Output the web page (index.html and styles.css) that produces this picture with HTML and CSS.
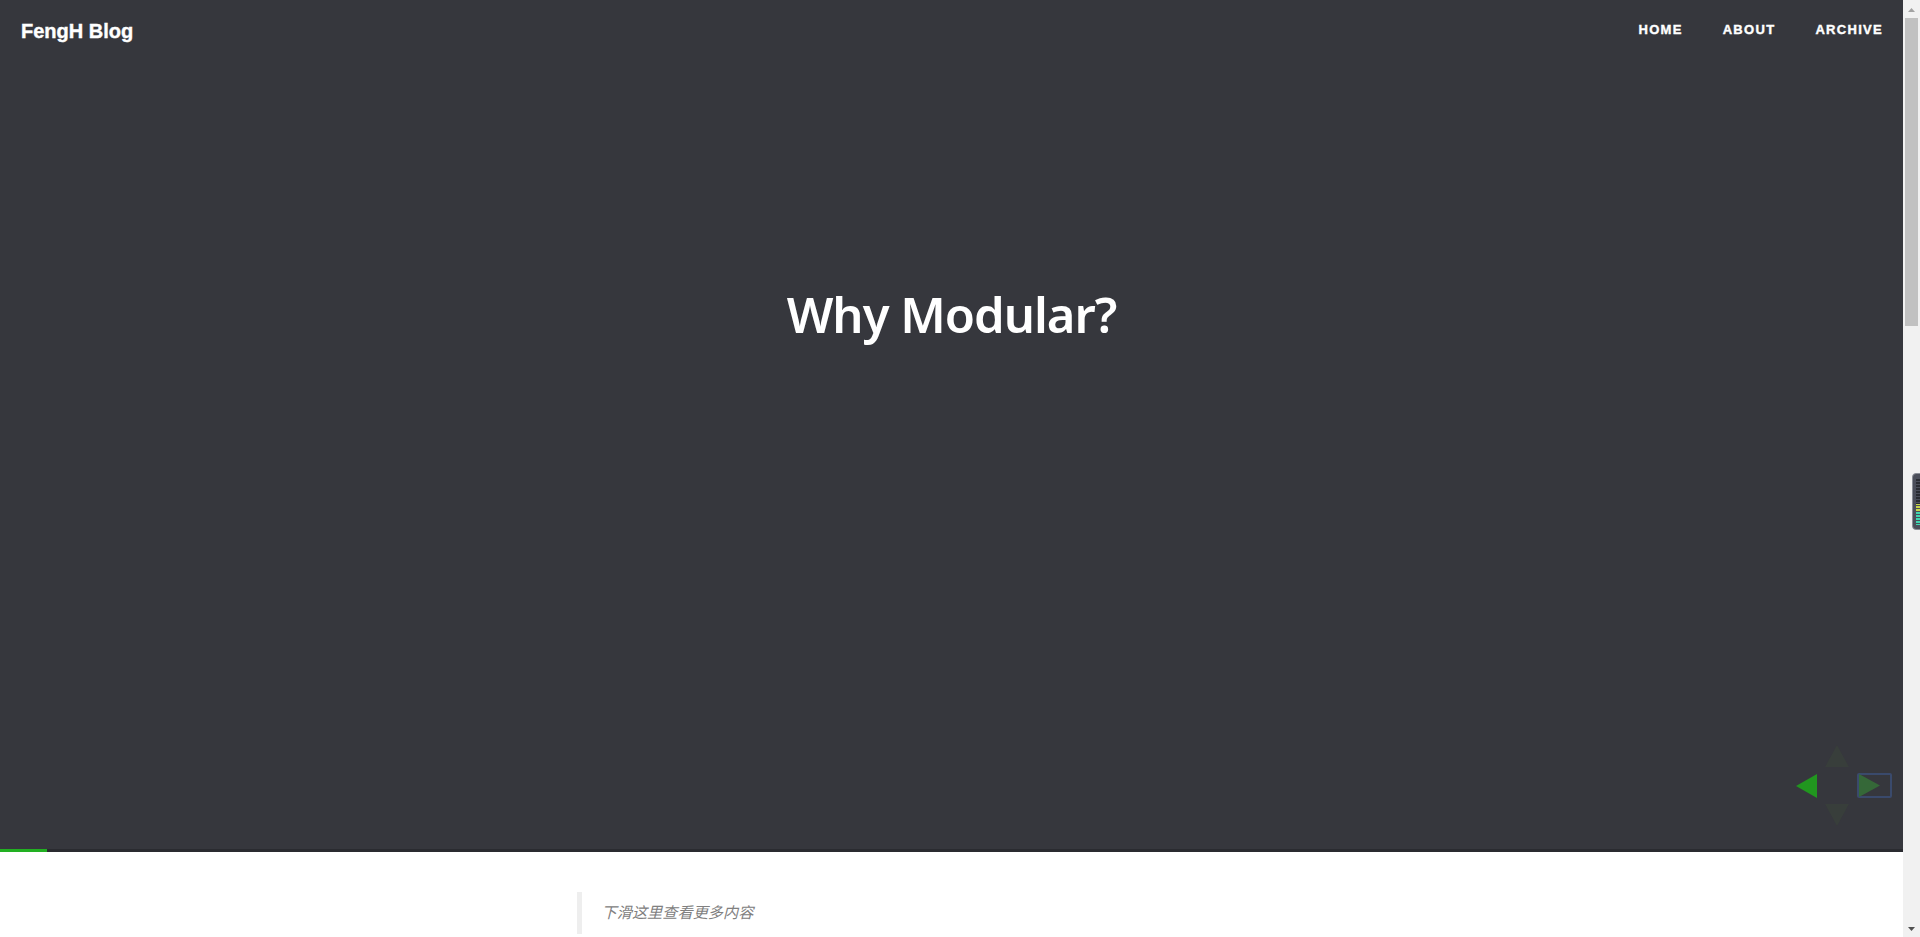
FILE: index.html
```html
<!DOCTYPE html>
<html lang="zh-CN">
<head>
<meta charset="utf-8">
<title>Why Modular? - FengH Blog</title>
<link rel="stylesheet" href="styles.css">
</head>
<body>
<div class="page">
  <header class="hero">
    <nav class="navbar">
      <a class="brand" href="#">FengH Blog</a>
      <ul class="nav-links">
        <li><a href="#">Home</a></li>
        <li><a href="#">About</a></li>
        <li><a href="#">Archive</a></li>
      </ul>
    </nav>
    <div class="stage">
      <h1 class="slide-title">Why Modular?</h1>
      <div class="controls">
        <span class="ctl ctl-up"><svg width="24" height="22" viewBox="0 0 24 22"><polygon points="12,0 24,22 0,22"/></svg></span>
        <span class="ctl ctl-left"><svg width="21" height="24" viewBox="0 0 21 24"><polygon points="0,12 21,0 21,24"/></svg></span>
        <span class="ctl ctl-right"><svg width="21" height="23" viewBox="0 0 21 23"><polygon points="21,11.5 0,0 0,23"/></svg></span>
        <span class="ctl ctl-down"><svg width="24" height="22" viewBox="0 0 24 22"><polygon points="0,0 24,0 12,22"/></svg></span>
      </div>
    </div>
    <div class="progress"><span class="progress-fill"></span></div>
  </header>
  <main class="post">
    <div class="post-col">
      <blockquote class="hint">下滑这里查看更多内容</blockquote>
    </div>
  </main>
</div>
<div class="scrollbar" aria-hidden="true">
  <span class="sb-btn sb-up"><svg width="7" height="4" viewBox="0 0 7 4"><polygon points="3.5,0 7,4 0,4"/></svg></span>
  <span class="sb-track"><span class="sb-thumb"></span></span>
  <span class="sb-btn sb-down"><svg width="7" height="4" viewBox="0 0 7 4"><polygon points="0,0 7,0 3.5,4"/></svg></span>
</div>
<div class="meter-widget"><span class="meter-bars"></span></div>
</body>
</html>
```
FILE: styles.css
```css
html, body {
  margin: 0;
  padding: 0;
}
html {
  overflow: hidden;
}
body {
  background: #fff;
  font-family: "Liberation Sans", Arial, sans-serif;
  height: 100vh;
  overflow: hidden;
  display: flex;
}
.page {
  flex: 1;
  min-width: 0;
  display: flex;
  flex-direction: column;
}
.hero {
  height: 852px;
  flex: none;
  background: #36373d;
  display: flex;
  flex-direction: column;
}
.navbar {
  height: 60px;
  display: flex;
  align-items: center;
  justify-content: space-between;
}
.brand {
  padding: 1px 0 0 21px;
  color: #fff;
  font-family: "Liberation Sans", Arial, sans-serif;
  font-weight: 700;
  font-size: 20px;
  line-height: 20px;
  text-decoration: none;
  -webkit-text-stroke: 0.4px #fff;
}
.nav-links {
  list-style: none;
  margin: 0;
  padding: 0;
  display: flex;
}
.nav-links a {
  display: block;
  padding: 0 20px;
  color: #fff;
  font-weight: 700;
  font-size: 13px;
  line-height: 20px;
  letter-spacing: 1.3px;
  text-transform: uppercase;
  text-decoration: none;
  -webkit-text-stroke: 0.4px #fff;
}
.stage {
  flex: 1;
  display: flex;
  flex-direction: column;
}
.slide-title {
  margin: 225px 0 0;
  text-align: center;
  color: #fff;
  font-family: "Noto Sans", "Open Sans", sans-serif;
  font-weight: 600;
  font-size: 49px;
  line-height: 59px;
  letter-spacing: -1px;
}
.controls {
  margin: auto 11px 23px 0;
  align-self: flex-end;
  display: grid;
  grid-template-columns: 21px 24px 35px;
  grid-template-rows: 22px 25px 22px;
  column-gap: 8px;
  row-gap: 6px;
}
.ctl {
  display: flex;
  align-items: center;
}
.ctl svg {
  display: block;
}
.ctl-up {
  grid-column: 2;
  grid-row: 1;
  fill: #383e3b;
}
.ctl-left {
  grid-column: 1;
  grid-row: 2;
  fill: #21961f;
}
.ctl-right {
  grid-column: 3;
  grid-row: 2;
  fill: #356838;
  border: 2px solid #3a4a6c;
  border-radius: 2px;
  box-sizing: border-box;
}
.ctl-down {
  grid-column: 2;
  grid-row: 3;
  fill: #383e3b;
}
.progress {
  height: 3px;
  background: #2a2b30;
  display: flex;
}
.progress-fill {
  width: 47px;
  background: #22b022;
}
.post {
  padding-top: 40px;
  min-height: 1900px;
}
.post-col {
  width: 750px;
  margin: 0 auto;
}
.hint {
  margin: 0;
  padding: 10px 20px;
  border-left: 5px solid #eee;
  color: #808080;
  font-style: italic;
  font-size: 15.2px;
  line-height: 21.7px;
  font-family: "Liberation Sans", "Noto Sans CJK SC", sans-serif;
}
.scrollbar {
  flex: none;
  width: 17px;
  height: 100vh;
  background: #f1f1f1;
  display: flex;
  flex-direction: column;
}
.sb-btn {
  height: 17px;
  flex: none;
  display: flex;
  align-items: center;
  justify-content: center;
}
.sb-btn svg {
  display: block;
}
.sb-up {
  fill: #a3a3a3;
  padding-top: 1px;
}
.sb-down {
  fill: #505050;
}
.sb-track {
  flex: 1;
  display: flex;
  flex-direction: column;
  padding: 0 2px;
}
.sb-thumb {
  height: 308px;
  background: #c1c1c1;
}
.meter-widget {
  position: fixed;
  right: -6px;
  top: 473px;
  width: 14px;
  height: 57px;
  background: #4b4e5a;
  border: 1px solid #8a8d96;
  border-radius: 4px;
  display: flex;
  justify-content: flex-start;
  padding: 5px 0 4px 3px;
  box-sizing: border-box;
}
.meter-bars {
  width: 5px;
  background:
    repeating-linear-gradient(to bottom, transparent 0 2px, #4b4e5a 2px 3px),
    linear-gradient(to bottom, #2a2c33 0 54%, #c8d64a 54% 72%, #3fd6b0 72% 100%);
}
```
